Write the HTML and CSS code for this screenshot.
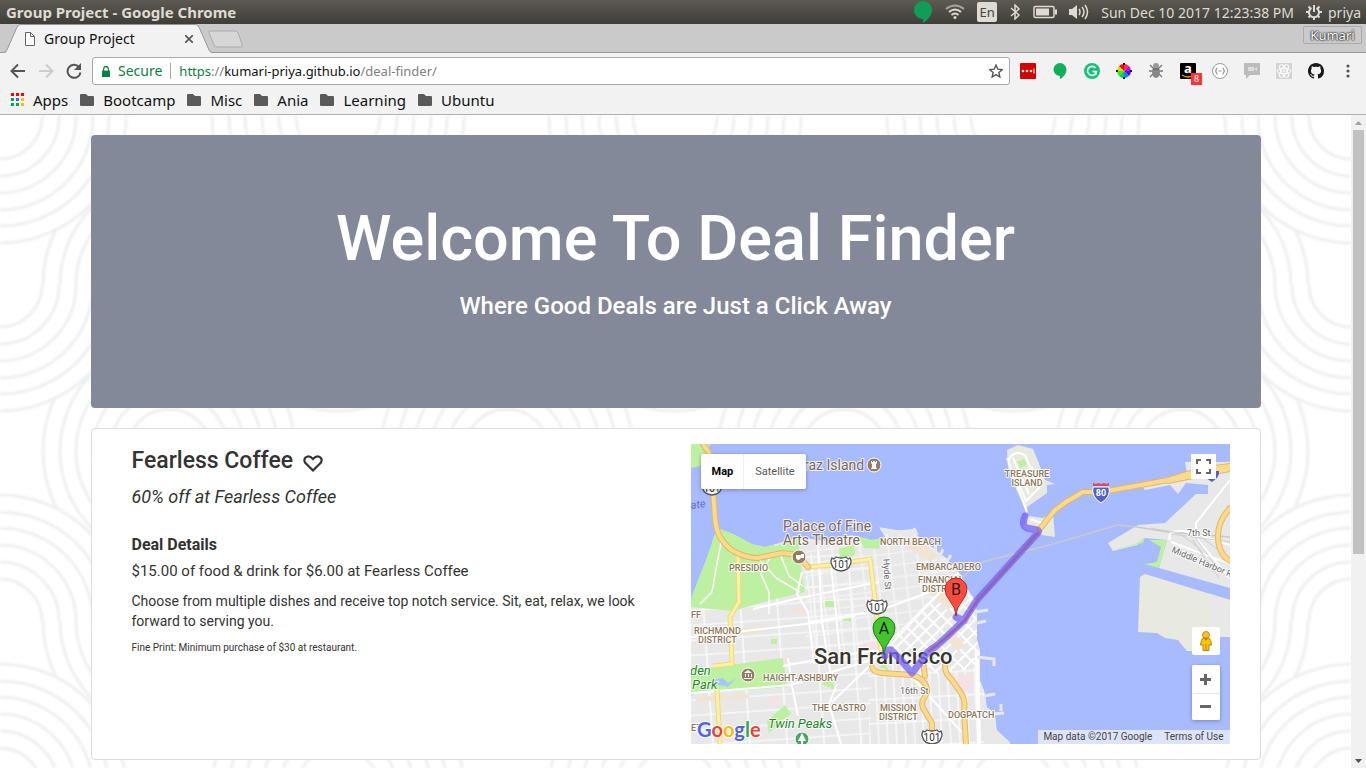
FILE: index.html
```html
<!DOCTYPE html>
<html lang="en">
<head>
<meta charset="utf-8">
<title>Group Project</title>
<link rel="stylesheet" href="styles.css">
</head>
<body>
<header class="system-bar">
  <span class="window-title">Group Project - Google Chrome</span>
  <div class="indicators">
    <svg width="20" height="24" viewBox="0 0 20 24"><path d="M10 1a9 9 0 0 0-9 9c0 5 4 9 9 9v4c5-3 9-8 9-13a9 9 0 0 0-9-9z" fill="#0f9d58"/></svg>
    <svg width="20" height="16" viewBox="0 0 20 16" fill="none" stroke-width="2"><path d="M1 5Q10-2 19 5" stroke="#aaa59b"/><path d="M4 8Q10 3 16 8M6.500 11Q10 8 13.500 11" stroke="#dfdbd2"/><circle cx="10" cy="13.500" r="1.500" fill="#dfdbd2"/></svg>
    <span class="keyboard">En</span>
    <svg width="12" height="16" viewBox="0 0 12 16" fill="none" stroke="#dfdbd2" stroke-width="1.500"><path d="M2 4l8 7-4 4V1l4 4-8 7"/></svg>
    <svg width="24" height="14" viewBox="0 0 24 14"><rect x="1" y="1.500" width="20" height="11" rx="1.500" fill="none" stroke="#dfdbd2" stroke-width="1.500"/><path d="M3 3.500h13v7H3zM22 4.500h2v5h-2z" fill="#dfdbd2"/></svg>
    <svg width="20" height="16" viewBox="0 0 20 16"><path d="M0 5h3l5-4v14l-5-4H0z" fill="#dfdbd2"/><path d="M10 5q2 3 0 6M13 3q4 5 0 10M16 1q5 7 0 14" fill="none" stroke="#dfdbd2" stroke-width="1.500"/></svg>
    <span class="clock">Sun Dec 10 2017 12:23:38 PM</span>
    <svg width="16" height="16" viewBox="0 0 16 16" fill="none" stroke="#dfdbd2"><path d="M5.500 4a5 5 0 1 0 5 0M8 1v7" stroke-width="2"/><path d="M8 13v3M3 8H0M16 8h-3M4.500 11.500l-2 2M11.500 11.500l2 2M4.500 4.500l-2-2M11.500 4.500l2-2" stroke-width="2"/></svg>
    <span class="user">priya</span>
  </div>
</header>

<div class="tab-strip">
  <div class="tab">
    <svg class="tab-shape" width="212" height="29" viewBox="0 0 212 29"><path d="M0 28.500h6L17 3q1-2.500 4-2.500h174q3 0 4 2.500l10 23q1 2.500 3 2.500V29H0z" fill="#f2f2f2"/><path d="M0 28.500h3q3 0 4-2.500L17 3q1-2.500 4-2.500h174q3 0 4 2.500l10 23q1 2.500 3 2.500" fill="none" stroke="#999"/></svg>
    <svg width="12" height="14" viewBox="0 0 12 14" fill="#fff" stroke="#666"><path d="M1.500.5h5l4 4v9h-9zM6.500.5v4h4"/></svg>
    <span class="tab-title">Group Project</span>
    <button class="tab-close" aria-label="Close tab"><svg width="8" height="8" viewBox="0 0 8 8" stroke="#555" stroke-width="1.600"><path d="M0 0l8 8M8 0L0 8"/></svg></button>
  </div>
  <button class="new-tab" aria-label="New tab"><svg width="35" height="18" viewBox="0 0 35 18"><path d="M2 1h25q2 0 3 2l4 11q1 3-1 3H10q-3 0-4-2L1 3Q0 1 2 1z" fill="#d6d6d6" stroke="#aaa"/></svg></button>
  <button class="profile">Kumari</button>
</div>

<div class="toolbar">
  <div class="nav">
    <button aria-label="Back"><svg width="16" height="16" viewBox="0 0 16 16" fill="none" stroke="#555" stroke-width="2"><path d="M15 8H2M8 1.500L1.500 8 8 14.500"/></svg></button>
    <button aria-label="Forward"><svg width="16" height="16" viewBox="0 0 16 16" fill="none" stroke="#ccc" stroke-width="2"><path d="M1 8h13M8 1.500L14.500 8 8 14.500"/></svg></button>
    <button aria-label="Reload"><svg width="16" height="16" viewBox="0 0 16 16"><path d="M13 4a6.500 6.500 0 1 0 1.500 5.500" fill="none" stroke="#555" stroke-width="2"/><path d="M15 0v7H8z" fill="#555"/></svg></button>
  </div>
  <div class="omnibox">
    <svg width="8" height="11" viewBox="0 0 10 12" preserveAspectRatio="none"><path d="M0 5h10v7H0z" fill="#0b8043"/><path d="M2 6V3.500a3 3 0 0 1 6 0V6" fill="none" stroke="#0b8043" stroke-width="1.500"/></svg>
    <span class="secure">Secure</span>
    <span class="url"><span class="scheme">https</span><span class="dim">://</span>kumari-priya.github.io<span class="dim">/deal-finder/</span></span>
    <button class="star" aria-label="Bookmark"><svg width="14" height="14" viewBox="0 0 14 14" fill="none" stroke="#555" stroke-width="1.400"><path d="M7 1l1.800 4.200 4.500.4-3.400 3 1 4.400L7 10.600 3.100 13l1-4.400-3.400-3 4.500-.4z"/></svg></button>
  </div>
  <div class="extensions">
    <svg viewBox="0 0 16 16"><rect width="16" height="16" rx="1" fill="#d50000"/><path d="M14 5.500v5" stroke="#fff"/><g fill="#fff"><circle cx="3" cy="8" r="1.300"/><circle cx="7" cy="8" r="1.300"/><circle cx="11" cy="8" r="1.300"/></g></svg>
    <svg viewBox="0 0 16 16"><path d="M8 0a6.500 6.500 0 0 0 0 13v3c4-2 6.500-6 6.500-9.500A6.500 6.500 0 0 0 8 0z" fill="#0faf5c"/></svg>
    <svg viewBox="0 0 16 16"><circle cx="8" cy="8" r="8" fill="#15c376"/><path d="M11.500 5A4.500 4.500 0 1 0 12.500 8.500H8.500M11 8.500L12 12" fill="none" stroke="#fff" stroke-width="1.600"/></svg>
    <svg viewBox="0 0 16 16"><path d="M8 8V1a7 7 0 0 1 5 2z" fill="#f32"/><path d="M8 8l5-5a7 7 0 0 1 2 5z" fill="#c0e"/><path d="M8 8h7a7 7 0 0 1-2 5z" fill="#50f"/><path d="M8 8l5 5a7 7 0 0 1-5 2z" fill="#08f"/><path d="M8 8v7a7 7 0 0 1-5-2z" fill="#0c6"/><path d="M8 8l-5 5a7 7 0 0 1-2-5z" fill="#3e1"/><path d="M8 8H1a7 7 0 0 1 2-5z" fill="#dd0"/><path d="M8 8L3 3a7 7 0 0 1 5-2z" fill="#f01"/><path d="M8 0v2M8 14v2M0 8h2M14 8h2" stroke="#111" stroke-width="2"/></svg>
    <svg viewBox="0 0 16 16"><path d="M2 2l3 3M14 2l-3 3M1 8h14M2 14l3-3M14 14l-3-3" stroke="#777" stroke-width="1.300"/><ellipse cx="8" cy="9" rx="4" ry="6" fill="#888"/><circle cx="8" cy="3" r="3" fill="#999"/><path d="M5 6h6" stroke="#555"/></svg>
    <span class="amazon"><svg viewBox="0 0 16 16"><rect width="16" height="16" rx="1" fill="#000"/><path d="M2 12q6 4 12 0" fill="none" stroke="#f90" stroke-width="1.300"/><text x="8" y="10" text-anchor="middle" class="amazon-a">a</text></svg><span class="badge">8</span></span>
    <svg viewBox="0 0 16 16" fill="none" stroke="#999"><circle cx="8" cy="8" r="7.500" fill="#fff"/><path d="M5.500 5q-1 0-1 1t-1 2q1 1 1 2t1 1M10.500 5q1 0 1 1t1 2q-1 1-1 2t-1 1M6.500 8h3" stroke-width="1.200"/></svg>
    <svg viewBox="0 0 16 16"><path d="M1 0h14q1 0 1 1v10q0 1-1 1H6l-4 4v-4H1q-1 0-1-1V1q0-1 1-1z" fill="#bcbcbc"/><path d="M4 4h6v4H4zM10 6l3-2v4z" fill="#ddd"/></svg>
    <svg viewBox="0 0 16 16" fill="none" stroke="#fff"><rect width="16" height="16" rx="1" fill="#d4d4d4" stroke="none"/><ellipse cx="8" cy="8" rx="7" ry="2.800"/><ellipse cx="8" cy="8" rx="7" ry="2.800" transform="rotate(60 8 8)"/><ellipse cx="8" cy="8" rx="7" ry="2.800" transform="rotate(120 8 8)"/><circle cx="8" cy="8" r="1"/></svg>
    <svg viewBox="0 0 16 16"><path fill="#191717" d="M8 0C3.580 0 0 3.580 0 8c0 3.540 2.290 6.530 5.470 7.590.4.070.55-.17.55-.38 0-.19-.01-.82-.01-1.490-2.010.37-2.530-.49-2.690-.94-.09-.23-.48-.94-.82-1.130-.28-.15-.68-.52-.01-.53.63-.01 1.080.58 1.230.82.72 1.210 1.870.87 2.330.66.07-.52.28-.87.51-1.070-1.780-.2-3.640-.89-3.640-3.950 0-.87.31-1.590.82-2.150-.08-.2-.36-1.020.08-2.120 0 0 .67-.21 2.200.82.64-.18 1.320-.27 2-.27s1.360.09 2 .27c1.530-1.040 2.200-.82 2.200-.82.44 1.100.16 1.920.08 2.120.51.56.82 1.270.82 2.150 0 3.070-1.870 3.750-3.650 3.950.29.25.54.73.54 1.480 0 1.070-.01 1.930-.01 2.200 0 .21.15.46.55.38A8.010 8.010 0 0 0 16 8c0-4.420-3.580-8-8-8z"/></svg>
    <svg viewBox="0 0 16 16" fill="#555"><circle cx="8" cy="3" r="1.600"/><circle cx="8" cy="8" r="1.600"/><circle cx="8" cy="13" r="1.600"/></svg>
  </div>
</div>

<svg class="defs" width="0" height="0"><defs><path id="folder" d="M1 0h5l2 2h5q1 0 1 1v8q0 1-1 1H1q-1 0-1-1V1q0-1 1-1z" fill="#5a5a5a"/></defs></svg>
<nav class="bookmarks">
  <a href="#apps"><svg width="13" height="13" viewBox="0 0 13 13"><path d="M0 0h3v3H0zM5 0h3v3H5zM10 0h3v3h-3z" fill="#f00"/><path d="M0 5h3v3H0zM0 10h3v3H0z" fill="#00a65a"/><path d="M5 5h3v3H5z" fill="#4560ff"/><path d="M10 5h3v3h-3zM10 10h3v3h-3z" fill="#fbb90c"/><path d="M5 10h3v3H5z" fill="#00a65a"/></svg>Apps</a>
  <a href="#bootcamp"><svg width="14" height="12"><use href="#folder"/></svg>Bootcamp</a>
  <a href="#misc"><svg width="14" height="12"><use href="#folder"/></svg>Misc</a>
  <a href="#ania"><svg width="14" height="12"><use href="#folder"/></svg>Ania</a>
  <a href="#learning"><svg width="14" height="12"><use href="#folder"/></svg>Learning</a>
  <a href="#ubuntu"><svg width="14" height="12"><use href="#folder"/></svg>Ubuntu</a>
</nav>

<div class="viewport">
  <main class="page">
    <svg class="backdrop" viewBox="0 0 1351 653" preserveAspectRatio="xMidYMin slice" aria-hidden="true">
      <defs>
        <g id="rings" fill="#fff" stroke="#eeeff0" stroke-width="3"><circle r="126"/><circle r="109"/><circle r="93"/><circle r="76"/><circle r="59"/><circle r="42"/></g>
        <clipPath id="lower"><path d="M-130 0h260v130h-260z"/></clipPath>
        <clipPath id="upper"><path d="M-130-130h260V0h-260z"/></clipPath>
        <g id="rings-down" clip-path="url(#lower)"><use href="#rings"/></g>
        <g id="rings-up" clip-path="url(#upper)"><use href="#rings"/></g>
        <g id="between"><use href="#rings-up" y="2"/><use href="#rings-up" y="170"/><use href="#rings-down" y="675"/><use href="#rings-down" y="506"/><use href="#rings" y="336"/></g>
        <g id="column"><use href="#rings-down" y="170"/><use href="#rings-down" y="2"/><use href="#rings-up" y="506"/><use href="#rings-up" y="675"/></g>
      </defs>
      <use href="#between" x="169"/><use href="#between" x="507"/><use href="#between" x="844"/><use href="#between" x="1182"/>
      <use href="#column" x="0"/><use href="#column" x="338"/><use href="#column" x="675"/><use href="#column" x="1013"/><use href="#column" x="1351"/>
    </svg>
    <div class="container">
      <section class="jumbotron">
        <h1>Welcome To Deal Finder</h1>
        <h2>Where Good Deals are Just a Click Away</h2>
      </section>
      <article class="card">
        <div class="deal">
          <h3>Fearless Coffee <button class="like" aria-label="Save deal"><svg width="20" height="18" viewBox="0 0 20 18"><path d="M10 16.500L3 9.500a4 4 0 0 1-.5-6q3.500-3 7.500 1.500 4-4.500 7.500-1.500a4 4 0 0 1-.5 6z" fill="none" stroke="#333" stroke-width="2.200"/></svg></button></h3>
          <p class="offer">60% off at Fearless Coffee</p>
          <h4>Deal Details</h4>
          <p class="summary">$15.00 of food &amp; drink for $6.00 at Fearless Coffee</p>
          <p class="description">Choose from multiple dishes and receive top notch service. Sit, eat, relax, we look forward to serving you.</p>
          <p class="fine-print">Fine Print: Minimum purchase of $30 at restaurant.</p>
        </div>
        <div class="map">
          <svg class="map-canvas" viewBox="0 0 539 300" preserveAspectRatio="xMidYMid slice">
            <defs>
              <path id="sf" d="M0 300V155L6 139 14 119 21 99 23 92 29 85 37 88 44 91 61 100 74 103 91 98 107 93 134 97 161 91 181 96 194 93 188 83 207 86 222 85 226 91 241 103 254 113 270 131 277 146 284 156 286 169 286 196 289 206 289 236 294 249 296 263 304 269 306 286 319 298V300z"/>
              <clipPath id="sf-clip"><use href="#sf"/></clipPath>
              <pattern id="west" width="37" height="15" patternUnits="userSpaceOnUse" patternTransform="rotate(-4)"><path d="M0 1h37M1 0v15" stroke="#fff" stroke-width="1.200"/></pattern>
              <pattern id="center" width="14" height="12" patternUnits="userSpaceOnUse" patternTransform="rotate(-7)"><path d="M0 1h14M1 0v12" stroke="#f8f8f8" stroke-width="1.200"/></pattern>
              <pattern id="soma" width="11" height="9" patternUnits="userSpaceOnUse" patternTransform="rotate(-45)"><path d="M0 1h11M1 0v9" stroke="#fff" stroke-width="2"/></pattern>
              <pattern id="mission" width="9" height="24" patternUnits="userSpaceOnUse" patternTransform="rotate(-3)"><path d="M0 1h9M1 0v24" stroke="#fafafa" stroke-width="1.500"/></pattern>
              <g id="us101"><path d="M-9-6Q-7-4-5-7 0-5 5-7 7-4 9-6 11-2 9 1 8 6 0 7-8 6-9 1-11-2-9-6z" fill="#fff" stroke="#555" stroke-width="1.300"/><text y="4" text-anchor="middle" class="shield">101</text></g>
            </defs>
            <rect width="539" height="300" fill="#a9bbff"/>
            <path d="M0 0h19l-2 8-8 14-9 2z" fill="#bdf0a0"/>
            <g fill="#e8eadf"><path d="M316 6l11-5 15 4 5 12 7 19 10 4-8 1v8l-20 14v5l1 4 15 2 10-5 2 24-13-2-19-7 4-13-5-13-11-24-3-11z"/><path d="M449 133l5-3 85 26v37h-10l-25 14h-8l-9-11-13-2-8-5-19-1z"/></g>
            <path d="M519 150l20 6v37h-10l-10-5z" fill="#e8e8e8"/>
            <path d="M539 18l-45 0 2 11-44 14 2 3 25-5 8 9 8-11 22 2v9h-12L474 79l-27 2-30 18 5 8 24-6 8-7 22 2-8 28 71 20z" fill="#e8e8e8"/>
            <path d="M422 106l24-7 8-6-2 6zM458 96l18 0-8 28-14-4 12-2 4-15z" fill="#bdf0a0"/>
            <g clip-path="url(#sf-clip)">
              <use href="#sf" fill="#e8e8e8"/>
              <path d="M0 110h180v190H0z" fill="url(#west)"/>
              <path d="M115 90h175v125H115z" fill="url(#center)"/>
              <path d="M178 210h115v90H178z" fill="url(#mission)"/>
              <path d="M190 206L265 130l28-4v96l-45 8z" fill="#e8e8e8"/><path d="M190 206L265 130l28-4v96l-45 8z" fill="url(#soma)"/>
              <path d="M0 80h31l14 10 40 12 22-8 3 29 4 25-34 8-38 11-42-4zM148 104l15-3 1 10-15 4zM134 157h9v6h-9zM152 171h8v6h-8zM80 195h6v5h-6zM167 92l24 3-3 10-15-1z" fill="#bdf0a0"/>
              <path d="M0 226l92-12 4 29-42 3-54 3zM86 268l8-7 6 9-12 9-10 10-2-12zM131 240l9-8 4 14zM188 223l6-4 4 8z" fill="#bdf0a0"/>
              <path d="M20 236l12-2 5 5 8-5-8 9-9-2z" fill="#abc6ff"/>
              <g fill="#efe5d2"><path d="M5 253l53-3v4l-53 4zM50 185l28-3v5l-28 4zM100 165l14-2v5l-14 1zM210 100l20-2 18 12-8 8zM236 146l30-15 11 17-20 18zM252 192l15 15 7-6-16-16z"/></g>
              <g fill="#f5e2e6"><path d="M78 253l9-2 1 8-12 6zM265 232l18-2v15l-15 4zM171 199l16-2 1 7-16 3zM92 213l6-1 1 8-5 2z"/></g>
              <g fill="none" stroke="#fff" stroke-width="2"><path d="M0 249l100-8 47-15 40-12M97 214l4 28 6 30M111 128l-5 22 11 18 6 52M0 193l114-13 50-8M62 165l42-10 84-17M117 178l70-11 52-19M92 222l58-11 40-5M141 258l50-48 94-100M127 100l4 78 10 60M140 120l9 90M218 230l60 66M150 300l-12-40 8-20"/><path d="M31 94l-4 20-6 34-12 12M80 112L70 130l8 18v22M68 115l17 19 24 14M90 112l8 20 14 10" stroke-width="1.500"/><path d="M286 206l2 94" stroke-width="4"/></g>
              <g fill="none" stroke="#f0d97e" stroke-width="5"><path id="avenue" d="M117 123l24-2 38-6 5 40 3 30 5 32M47 110l1 48-9 15 2 47-19 2M26 245l3 55"/></g><use href="#avenue" fill="none" stroke="#fcf0a4" stroke-width="3"/>
            </g>
            <path d="M190 85l12 5M223 84l3 7M235 94l4 9M244 98l1 12M252 105l-5 12M260 111l-8 12M267 120l-10 9M284 168l13-2M286 179l9-2M286 213l17 2v7M293 252l11-2M301 270l12-1M310 260v7" fill="none" stroke="#e8e8e8" stroke-width="3"/>
            <path d="M268 138l16-18 82-21 60-18 20 2 31 5 62 5" fill="none" stroke="#c9c9c9" stroke-width="1.500"/>
            <g fill="none" stroke="#fff" stroke-width="2"><path d="M316 14l20 54M317 18q4-13 17-7l14 33-13 13-11-27M322 14l16 36M327 29l15-5M331 39l15-4M339 75l14 5 7-5M539 36l-34 43v15l34 40M479 96q-4-10 14-9l46 14M480 98l59 22"/></g>
            <path d="M326 18l7-3 3 6-7 3z" fill="#bdf0a0"/>
            <g fill="none" stroke="#cfcfcf"><path d="M460 84l28 5 20 15 20 30M505 89l34 26M504 93l25 35M502 96l20 32M480 90l59 8"/></g>
            <g fill="none" stroke-linecap="round">
              <g stroke="#e3b765" stroke-width="6"><path id="hw1" d="M12 0l6 9 4 37 2 27q1 13 5 20 6 10 15 15 12 6 23 6l24-5 16 2 10 12"/><path id="hw2" d="M349 85l14-18 12-9 17-10 19 0 66-12 32-10 30-4M477 37l20-4 42-8"/><path id="hw3" d="M181 223q1 5 10 6l30 2q12 3 15 13 1 5-3 10-3 4-1 10l9 15v21M234 232l-2-14M254 222q0 8 7 14l9 13q5 8 3 18l2 33M539 64q-12 13-12 28 0 18 12 25"/></g>
              <g stroke="#fbda8b" stroke-width="4"><use href="#hw1"/><use href="#hw2"/><use href="#hw3"/></g>
            </g>
            <g class="poi">
              <text x="113" y="26">raz Island</text><text x="92" y="87">Palace of Fine</text><text x="92" y="101">Arts Theatre</text>
            </g>
            <g class="district">
              <text x="336" y="33" text-anchor="middle">TREASURE</text><text x="336" y="42" text-anchor="middle">ISLAND</text>
              <text x="189" y="101">NORTH BEACH</text><text x="38" y="127">PRESIDIO</text><text x="225" y="126">EMBARCADERO</text>
              <text x="227" y="139">FINANCIAL</text><text x="231" y="148">DISTRICT</text>
              <text x="0" y="174">FF</text><text x="3" y="190">RICHMOND</text><text x="7" y="199">DISTRICT</text>
              <text x="72" y="237">HAIGHT-ASHBURY</text><text x="121" y="267">THE CASTRO</text>
              <text x="189" y="267">MISSION</text><text x="188" y="276">DISTRICT</text><text x="257" y="274">DOGPATCH</text><text x="0" y="287">ET</text>
            </g>
            <g class="street"><text x="209" y="250">16th St</text><text x="496" y="92">7th St</text><text x="480" y="108" transform="rotate(23 480 108)">Middle Harbor Rd</text><text x="192" y="115" transform="rotate(86 192 115)">Hyde St</text></g>
            <text x="0" y="65" class="water" transform="rotate(-7 0 65)">ate</text>
            <g class="park"><text x="-4" y="231">lden</text><text x="1" y="245">Park</text><text x="77" y="284">Twin Peaks</text></g>
            <g fill="#967c63" stroke="#fff"><circle cx="183" cy="21" r="7"/><circle cx="108" cy="113" r="7"/><circle cx="57" cy="231" r="7"/></g>
            <path d="M180 18v-1h1v1h1v-1h2v1h1v-1h1v1q0 2-1 2v3l1 2h-6l1-2v-3q-1 0-1-2zM105 111h5v3q-3 4-5 0zM110 110h3v4h-3zM53 229l4-3 4 3zM54 230h1v3h-1zM57 230h1v3h-1zM60 230h1v3h-1zM53 234h8v1h-8z" fill="#fff"/>
            <circle cx="111" cy="295" r="7" fill="#4fa55d" stroke="#fff"/><path d="M111 289l4 8h-3v3h-2v-3h-3z" fill="#fff"/>
            <use href="#us101" x="150" y="120"/><use href="#us101" x="186" y="163"/><use href="#us101" x="241" y="293"/><use href="#us101" x="21" y="44"/>
            <g><path d="M402 43h16q2 10-8 16-10-6-8-16z" fill="#5360c8" stroke="#fff"/><path d="M402 42v-3l3 1 2-1 3 1 3-1 2 1 3-1v3z" fill="#dc4a4a"/><text x="410" y="52" text-anchor="middle" class="interstate">80</text></g>
            <path d="M512 27h16q1 6-7 11-10-6-9-11z" fill="#5360c8"/>
            <text x="123" y="220" class="city">San Francisco</text>
            <g fill="none" stroke-linejoin="round" stroke-linecap="round"><path d="M334 72q-4 10 2 12l10 2q3 1 0 4l-60 66-13 20q-18 18-29 27-8 4-12 12l-11 14-13-15-8-8q-7-1-6 6M265 173l8 4" stroke="#7461f4" stroke-opacity=".75" stroke-width="7"/><path d="M347 89l-61 68-12 19q-20 20-36 31" stroke="#9265bd" stroke-width="3"/></g>
            <g stroke-width="1"><path d="M193 211q0-8-6-15-5-6-5-12a11 11 0 0 1 22 0q0 6-5 12-6 7-6 15z" fill="#42c52d" stroke="#237a18"/><path d="M265 172q0-8-6-15-5-6-5-12a11 11 0 0 1 22 0q0 6-5 12-6 7-6 15z" fill="#ff4b3e" stroke="#a52a22"/></g>
            <g class="marker"><text x="193" y="190">A</text><text x="265" y="151">B</text></g>
            <text x="6" y="293" class="google"><tspan fill="#4c63f4">G</tspan><tspan fill="#ea4335">o</tspan><tspan fill="#fbbc05">o</tspan><tspan fill="#4c63f4">g</tspan><tspan fill="#34a853">l</tspan><tspan fill="#ea4335">e</tspan></text>
          </svg>
          <div class="map-types"><button class="selected">Map</button><button>Satellite</button></div>
          <button class="fullscreen" aria-label="Toggle fullscreen"><svg width="15" height="15" viewBox="0 0 15 15"><path d="M1 5V1h4M10 1h4v4M14 10v4h-4M5 14H1v-4" fill="none" stroke="#666" stroke-width="2"/></svg></button>
          <div class="map-tools">
            <button class="pegman" aria-label="Street View"><svg width="12" height="20" viewBox="0 0 12 20"><circle cx="6" cy="4" r="3.500" fill="#fbc02d" stroke="#c49311"/><path d="M3 7h6q2 1 2.500 7H9v5.500H3V14H.5Q1 8 3 7z" fill="#fbc200" stroke="#b78b12"/><path d="M4 7h4l-2 3z" fill="#e8671c"/><path d="M6 13v6" stroke="#b78b12"/></svg></button>
            <div class="zoom"><button aria-label="Zoom in"><svg width="11" height="11" viewBox="0 0 11 11"><path d="M0 5.500h11M5.500 0v11" stroke="#666" stroke-width="3"/></svg></button><button aria-label="Zoom out"><svg width="11" height="11" viewBox="0 0 11 11"><path d="M0 5.500h11" stroke="#666" stroke-width="3"/></svg></button></div>
          </div>
          <div class="attribution"><span>Map data ©2017 Google</span><a href="#terms">Terms of Use</a></div>
        </div>
      </article>
    </div>
  </main>
  <div class="scrollbar" aria-hidden="true">
    <svg width="15" height="15" viewBox="0 0 15 15"><path d="M4 10l3.500-4L11 10z" fill="#a0a0a0"/></svg>
    <div class="track"><div class="thumb"></div></div>
    <svg width="15" height="15" viewBox="0 0 15 15"><path d="M4 6l3.500 4L11 6z" fill="#505050"/></svg>
  </div>
</div>
</body>
</html>
```
FILE: styles.css
```css
* { box-sizing: border-box; }
body {
  margin: 0;
  height: 100vh;
  display: flex;
  flex-direction: column;
  overflow: hidden;
  background: #fff;
  color: #333;
  font-family: Roboto, "Liberation Sans", sans-serif;
}
button { border: 0; padding: 0; background: none; font: inherit; color: inherit; display: flex; align-items: center; justify-content: center; }
a { color: inherit; text-decoration: none; }
svg { display: block; flex: none; }
.defs { position: absolute; }
.system-bar, .tab-strip, .toolbar, .bookmarks { font-family: "Noto Sans", "Open Sans", sans-serif; flex: none; display: flex; align-items: center; font-size: 14px; }

.system-bar { height: 24px; padding: 0 5px 0 6px; justify-content: space-between; background: linear-gradient(#5c5a51, #3e3d39); color: #dfdbd2; }
.window-title { font-weight: 700; font-size: 15px; line-height: 20px; }
.indicators { display: flex; align-items: center; gap: 12px; }
.keyboard { background: #dfdbd2; color: #45443f; border-radius: 2px; width: 20px; height: 20px; line-height: 20px; text-align: center; font-size: 13px; }
.clock { white-space: nowrap; }
.user { margin-left: -6px; }

.tab-strip { height: 29px; padding: 0 4px 0 0; background: #cacaca; box-shadow: inset 0 -1px #999; }
.tab { position: relative; width: 212px; height: 29px; padding: 0 19px 0 24px; display: flex; align-items: center; gap: 8px; color: #111; }
.tab-shape { position: absolute; left: 0; top: 0; }
.tab svg:not(.tab-shape), .tab-title, .tab-close { position: relative; }
.tab-title { flex: 1; }
.new-tab { margin-left: -4px; }
.profile { margin: 0 0 7px auto; width: 59px; height: 18px; border: 1px solid #aaa; border-radius: 2px; color: #fff; text-shadow: 0 0 1px #222, 0 0 2px #222, 0 0 2px #222; font-size: 13px; }

.toolbar { height: 36px; padding: 0 10px; gap: 10px; background: #f2f2f2; }
.nav { display: flex; gap: 12px; }
.omnibox { flex: 1; height: 28px; display: flex; align-items: center; gap: 8px; padding: 0 6px 0 9px; background: #fff; border: 1px solid #a9a9a9; border-radius: 3px; }
.secure { color: #0b8043; padding-right: 8px; border-right: 1px solid #aaa; line-height: 16px; }
.url { flex: 1; color: #111; font-size: 13px; }
.scheme { color: #0b8043; }
.dim { color: #808080; }
.extensions { display: flex; gap: 16px; }
.extensions svg { width: 16px; height: 16px; }
.amazon { position: relative; }
.amazon-a { fill: #fff; font: 700 13px "Noto Sans", sans-serif; }
.badge { position: absolute; left: 11px; top: 10px; width: 11px; height: 12px; background: #f33; color: #fff; font-size: 9px; line-height: 12px; text-align: center; }

.bookmarks { height: 26px; padding: 0 11px 4px; gap: 12px; background: #f2f2f2; border-bottom: 1px solid #b0b0b0; color: #111; font-size: 15px; }
.bookmarks a { display: flex; align-items: center; gap: 9px; line-height: 20px; }

.viewport { flex: 1; min-height: 0; display: flex; }
.page { flex: 1; position: relative; overflow: hidden; }
.backdrop { position: absolute; left: 0; top: 0; width: 100%; height: 100%; filter: blur(1px); }
.container { position: relative; max-width: 1170px; margin: 0 auto; padding-top: 20px; }
.jumbotron { background: #838998; color: #fff; border-radius: 4px; padding: 69px 60px 84px; margin-bottom: 20px; text-align: center; }
.jumbotron h1 { margin: 0 0 14px; font-size: 63px; line-height: 70px; font-weight: 500; }
.jumbotron h2 { margin: 0; font-size: 24px; line-height: 36px; font-weight: 500; }
.card { display: grid; grid-template-columns: 1fr 1fr; background: #fff; border: 1px solid #ddd; border-radius: 4px; padding: 15px; }
.deal { padding: 0 25px; }
.deal h3 { display: flex; align-items: center; gap: 10px; margin: 4px 0 9px; font-size: 23px; line-height: 26px; font-weight: 500; }
.like { padding-top: 4px; }
.deal h4 { margin: 0 0 7px; font-size: 16px; line-height: 18px; font-weight: 700; }
.deal p { margin: 0 0 10px; }
.deal .offer { margin-bottom: 25px; font-size: 18px; line-height: 28px; font-style: italic; }
.deal .summary { font-size: 15px; line-height: 20px; }
.deal .description { font-size: 14px; line-height: 20px; }
.deal .fine-print { font-size: 10px; line-height: 14px; }

.map { position: relative; height: 300px; margin: 0 15px; overflow: hidden; font-size: 11px; }
.map-canvas { width: 100%; height: 100%; }
.map button { background: #fff; }
.map-types { position: absolute; left: 10px; top: 10px; display: flex; height: 35px; border-radius: 2px; overflow: hidden; box-shadow: 0 1px 4px rgba(0,0,0,.3); color: #565656; }
.map-types button { padding: 0 11px; }
.map-types .selected { font-weight: 700; color: #000; padding-right: 10px; border-right: 1px solid #eee; }
.fullscreen { position: absolute; right: 14px; top: 10px; width: 25px; height: 25px; }
.map-tools { position: absolute; right: 10px; bottom: 24px; display: grid; gap: 10px; }
.map-tools button { width: 28px; height: 28px; border-radius: 2px; }
.zoom { background: #fff; border-radius: 2px; box-shadow: 0 1px 4px rgba(0,0,0,.3); }
.zoom button + button { height: 27px; box-shadow: inset 0 1px #e6e6e6; }
.attribution { position: absolute; right: 0; bottom: 0; display: flex; gap: 12px; padding: 0 6px 0 5px; font-size: 10px; line-height: 14px; color: #444; background: rgba(245,245,245,.7); }

.map-canvas text { font-family: Roboto, sans-serif; paint-order: stroke; stroke: #fff; stroke-opacity: .85; stroke-width: 2px; stroke-linejoin: round; }
.poi text { font-size: 14px; fill: #7d6552; }
.district text { font-size: 9px; fill: #8b7758; font-weight: 500; }
.street text { font-size: 9px; fill: #666; }
.map-canvas .water { font-size: 11px; fill: #5b72d8; stroke: none; font-style: italic; }
.park text { font-size: 13px; fill: #22881e; font-style: italic; }
.map-canvas .city { font-size: 22px; font-weight: 500; fill: #38352c; }
.map-canvas .shield { font-size: 10px; fill: #333; stroke: none; }
.map-canvas .interstate { font-size: 9px; font-weight: 700; fill: #fff; stroke: none; }
.marker text { font-size: 16px; text-anchor: middle; fill: #222; stroke: none; }
.map-canvas .google { font-family: Lato, sans-serif; font-size: 20px; font-weight: 700; }

.scrollbar { width: 15px; display: flex; flex-direction: column; background: #f1f1f1; }
.track { flex: 1; padding: 0 2px; }
.thumb { height: 68%; background: #c1c1c1; }
```
